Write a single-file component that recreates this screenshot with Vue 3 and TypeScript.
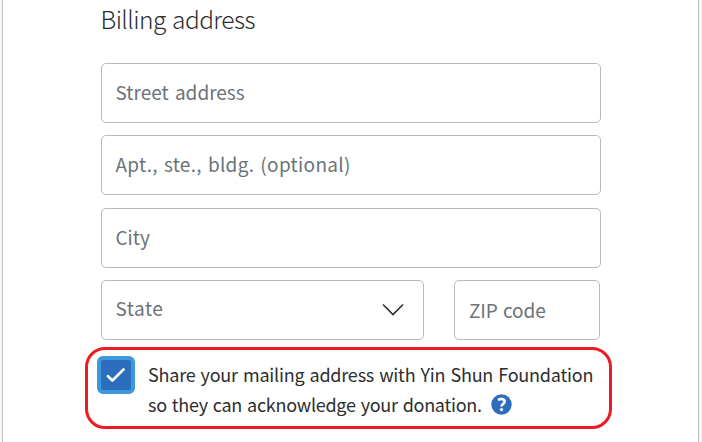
<script setup lang="ts">
import { ref } from 'vue'

interface Field {
  id: string
  label: string
}

const lines: Field[] = [
  { id: 'street', label: 'Street address' },
  { id: 'unit', label: 'Apt., ste., bldg. (optional)' },
  { id: 'city', label: 'City' },
]
const shareAddress = ref(true)
</script>

<template>
  <main class="page">
    <section class="card">
      <h2 class="title"><span>Billing address</span></h2>
      <div class="fields">
        <div v-for="f in lines" :key="f.id" class="field" :class="f.id"><span>{{ f.label }}</span></div>
        <div class="row">
          <div class="field state">
            <span>State</span>
            <svg class="chevron" width="22" height="14" viewBox="0 0 22 14">
              <path d="M1 1.5 11 11.5 21 1.5" fill="none" stroke="#2c2e2f" stroke-width="1.6" />
            </svg>
          </div>
          <div class="field zip"><span>ZIP code</span></div>
        </div>
      </div>
      <div class="consent">
        <button class="check" type="button" role="checkbox" :aria-checked="shareAddress" @click="shareAddress = !shareAddress">
          <svg v-if="shareAddress" width="30" height="30" viewBox="0 0 30 30">
            <path d="M7 16.3 11.4 20.5 22.6 9.4" fill="none" stroke="#fff" stroke-width="2.7" stroke-linecap="round" stroke-linejoin="round" />
          </svg>
        </button>
        <div class="copy">
          <div class="line"><span class="first">Share your mailing address with Yin Shun Foundation</span></div>
          <div class="line">
            <span class="second">so they can acknowledge your donation.</span>
            <svg class="help" width="21" height="21" viewBox="0 0 21 21">
              <circle cx="10.5" cy="10.5" r="10.2" fill="#2d6dbd" />
              <path d="M7.1 6.1C9.4 4.5 13.7 4.5 13.7 7.6C13.7 10 10.5 9.7 10.5 12.6" fill="none" stroke="#fff" stroke-width="2.6" />
              <circle cx="10.5" cy="15.6" r="1.6" fill="#fff" />
            </svg>
          </div>
        </div>
      </div>
    </section>
  </main>
</template>

<style>
body {
  margin: 0;
  overflow: hidden;
}
</style>

<style scoped>
* {
  box-sizing: border-box;
}
.page {
  height: 442px;
  padding: 0 3px 0 2px;
  background: #f5f7fa;
  font-family: "Noto Sans CJK SC", "Noto Sans", sans-serif;
  color: #2c2e2f;
}
.card {
  height: 442px;
  padding: 0 82px;
  border: solid #b7bcbf;
  border-width: 0 1px;
  background: #fff;
}
.title {
  margin: 0;
  height: 63px;
  padding: 0 0 0 15.5px;
  font-size: 24.5px;
  font-weight: 300;
  line-height: 38px;
  letter-spacing: -0.58px;
  word-spacing: 1.6px;
  white-space: nowrap;
}
.fields {
  display: flex;
  flex-direction: column;
  gap: 12px;
  width: 516px;
  padding-left: 16px;
}
.field {
  display: flex;
  align-items: center;
  height: 60px;
  padding: 0 14px 2px 13.5px;
  border: 1px solid #b7b9ba;
  border-radius: 5px;
  color: #6c7378;
  font-size: 19px;
  line-height: 28px;
  letter-spacing: 0;
  word-spacing: 2px;
  white-space: nowrap;
}
.unit {
  margin-bottom: 1px;
  letter-spacing: 0.3px;
  word-spacing: 1.5px;
}
.row {
  display: flex;
  gap: 30px;
}
.state {
  width: 323px;
  justify-content: space-between;
  padding-right: 19px;
  padding-bottom: 4px;
  letter-spacing: 0.5px;
}
.chevron {
  margin-top: 3px;
}
.zip {
  width: 146px;
  padding: 0 0 0 14px;
  letter-spacing: -0.1px;
  word-spacing: 1px;
}
.consent {
  display: flex;
  gap: 13px;
  width: 527px;
  height: 82px;
  margin-top: 7px;
  padding: 6px 0 0 9px;
  border: 3px solid #ed1c24;
  border-radius: 20px;
}
.check {
  display: block;
  flex: none;
  width: 38px;
  height: 38px;
  padding: 0;
  border: 4px solid #3d98dc;
  border-radius: 6px;
  background: #2d6dbd;
}
.check svg {
  display: block;
}
.copy {
  padding-top: 3px;
}
.line {
  display: flex;
  align-items: center;
  height: 30px;
  font-size: 18px;
  line-height: 26px;
  white-space: nowrap;
}
.first {
  letter-spacing: -0.21px;
  word-spacing: 1.25px;
}
.second {
  letter-spacing: -0.27px;
  word-spacing: 1.2px;
}
.help {
  margin-left: 9px;
}
</style>
